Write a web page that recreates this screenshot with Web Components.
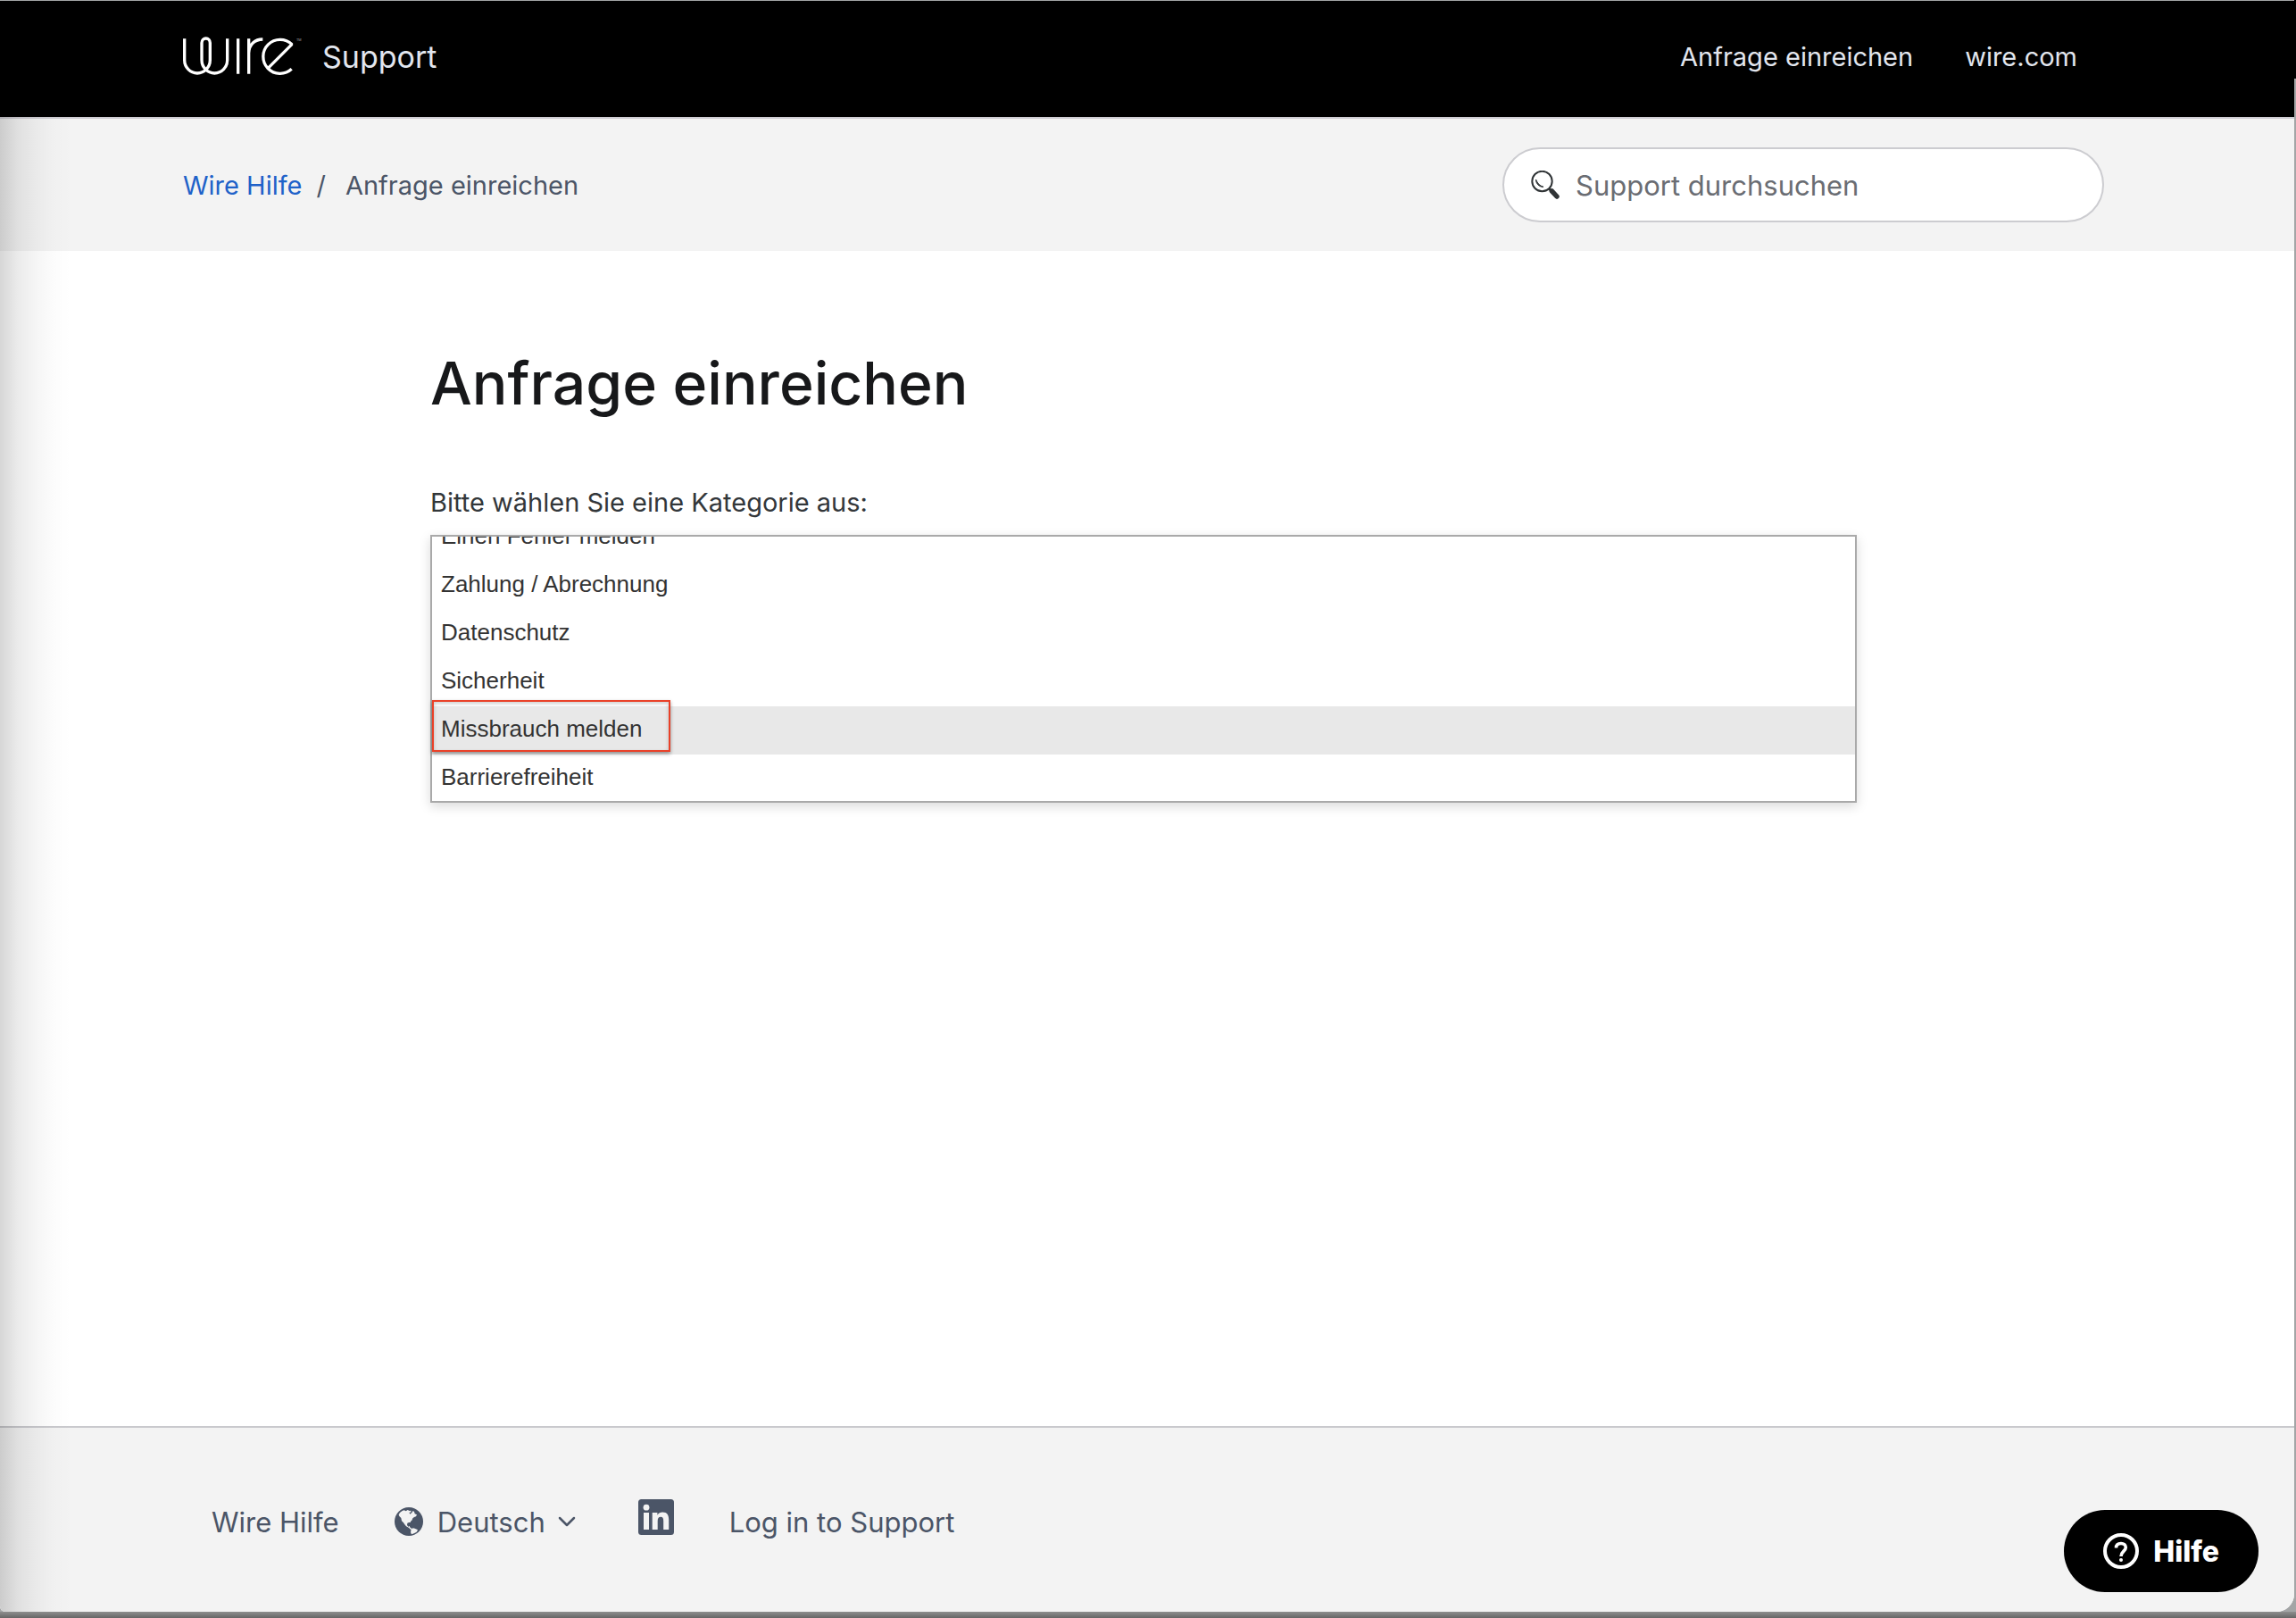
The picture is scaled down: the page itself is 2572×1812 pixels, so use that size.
<!DOCTYPE html>
<html lang="de">
<head>
<meta charset="utf-8">
<meta name="viewport" content="width=device-width, initial-scale=1">
<title>Anfrage einreichen – Wire Hilfe</title>
<style>
  body {
    margin: 0;
    background: #8c8f90;
    font-family: Inter, "Liberation Sans", sans-serif;
    color: #33373a;
  }
</style>
</head>
<body>
<support-window>
  <site-header slot="header"></site-header>
  <crumb-bar slot="crumbs" current="Anfrage einreichen"></crumb-bar>
  <request-form></request-form>
  <site-footer slot="footer"></site-footer>
</support-window>
<help-button text="Hilfe"></help-button>

<script>
class BaseElement extends HTMLElement {
  constructor() {
    super();
    this.attachShadow({ mode: 'open' });
    this._render();
  }
}

// Browser window: rounded lower corners, shade falling in from the left
class SupportWindow extends BaseElement {
  _render() {
    this.shadowRoot.innerHTML = `
      <style>
        :host {
          display: flex;
          box-sizing: border-box;
          min-height: 100vh;
          padding: 1px 2px 7px 0;
          background:
            linear-gradient(#000, #000) top right / 2px 88px no-repeat,
            linear-gradient(#8e8e8e, #666) bottom / 100% 7px no-repeat,
            #a3a5a6;
        }

        .frame {
          flex: 1;
          display: flex;
          flex-direction: column;
          position: relative;
          overflow: hidden;
          background: #fff;
          border-radius: 0 0 20px 6px;
        }

        .shade {
          position: absolute;
          inset: 0 auto 0 0;
          width: 80px;
          background: linear-gradient(
            to right,
            rgba(0, 0, 0, 0.16),
            rgba(0, 0, 0, 0.08) 25%,
            rgba(0, 0, 0, 0.04) 50%,
            rgba(0, 0, 0, 0.01) 75%,
            rgba(0, 0, 0, 0)
          );
          pointer-events: none;
        }

        main {
          flex: 1;
        }
      </style>

      <div class="frame">
        <slot name="header"></slot>
        <slot name="crumbs"></slot>
        <main><slot></slot></main>
        <slot name="footer"></slot>
        <div class="shade"></div>
      </div>
    `;
  }
}

class WireLogo extends BaseElement {
  _render() {
    this.shadowRoot.innerHTML = `
      <style>
        :host {
          display: block;
          height: 44px;
        }

        svg {
          display: block;
        }
      </style>

      <svg width="134" height="44" viewBox="75 121 402 132" fill="none" stroke="#fff" stroke-width="10" role="img" aria-label="Wire">
        <path d="M80 128V200A43 44 0 0 0 123 244A43 44 0 0 0 166 200V142A14 15 0 0 0 138 142V200A43 44 0 0 0 181 244A43 44 0 0 0 224 200V128"/>
        <path d="M260 128V246M296 246V128M296 176C297 147 317 130 343 130"/>
        <path d="M440 230A57 57 0 1 1 441 147L363 225" stroke-linejoin="bevel"/>
        <text x="456" y="137" font-size="11" fill="#aaa" stroke="none">TM</text>
      </svg>
    `;
  }
}

class SiteHeader extends BaseElement {
  _render() {
    this.shadowRoot.innerHTML = `
      <style>
        :host {
          display: block;
          padding-right: 8px;
          background: #000;
          border-bottom: 2px solid #cfcdd3;
        }

        .bar {
          display: flex;
          align-items: center;
          justify-content: space-between;
          box-sizing: border-box;
          max-width: 2152px;
          height: 130px;
          margin: 0 auto;
          padding-bottom: 6px;
        }

        a {
          color: #e2e6ee;
          text-decoration: none;
        }

        .brand {
          display: flex;
          align-items: center;
          gap: 22px;
          font-size: 34px;
        }

        nav {
          display: flex;
          gap: 58px;
          padding-right: 30px;
          font-size: 29px;
        }
      </style>

      <div class="bar">
        <a class="brand" href="#"><wire-logo></wire-logo><span>Support</span></a>
        <nav>
          <a href="#">Anfrage einreichen</a>
          <a href="#">wire.com</a>
        </nav>
      </div>
    `;
  }
}

class CrumbBar extends BaseElement {
  _render() {
    this.shadowRoot.innerHTML = `
      <style>
        :host {
          display: block;
          padding-right: 8px;
          background: #f3f3f3;
        }

        .bar {
          display: flex;
          align-items: center;
          justify-content: space-between;
          max-width: 2152px;
          height: 148px;
          margin: 0 auto;
        }

        ol {
          display: flex;
          margin: 0;
          padding: 0;
          list-style: none;
          font-size: 29px;
          color: #4b5567;
        }

        li + li::before {
          content: "/";
          margin: 0 22px 0 16px;
        }

        a {
          color: #1f62c9;
          text-decoration: none;
        }
      </style>

      <div class="bar">
        <nav aria-label="Breadcrumb">
          <ol>
            <li><a href="#">Wire Hilfe</a></li>
            <li>${this.getAttribute('current') || ''}</li>
          </ol>
        </nav>
        <search-box></search-box>
      </div>
    `;
  }
}

class SearchBox extends BaseElement {
  _render() {
    this.shadowRoot.innerHTML = `
      <style>
        :host {
          display: block;
        }

        label {
          display: flex;
          align-items: center;
          gap: 18px;
          box-sizing: border-box;
          width: 674px;
          height: 84px;
          padding: 0 30px;
          border: 2px solid #ccccd0;
          border-radius: 42px;
          background: #fff;
        }

        input {
          flex: 1;
          min-width: 0;
          padding: 0;
          border: none;
          outline: none;
          background: none;
          font: inherit;
          font-size: 31px;
          color: #33373a;
        }

        input::placeholder {
          color: #6a6d73;
          opacity: 1;
        }
      </style>

      <label>
        <svg width="32" height="32" viewBox="0 0 32 32" fill="none" stroke="#303436" aria-hidden="true">
          <circle cx="12.5" cy="12" r="11.2" stroke-width="2"/>
          <path d="M5.5 10C5.5 14.500 9 18.500 14 18.300C9.500 17 7.500 14.500 5.500 10Z" fill="#303436" stroke-width="1"/>
          <path d="M20 20L23 23" stroke-width="2.5"/>
          <path d="M23.3 22.8L29 29" stroke-width="5.5" stroke-linecap="round"/>
        </svg>
        <input type="search" placeholder="Support durchsuchen" aria-label="Support durchsuchen">
      </label>
    `;
  }
}

class RequestForm extends BaseElement {
  connectedCallback() {
    // The list opens scrolled to its lower entries, the first one half hidden
    this.shadowRoot.querySelector('select').scrollTop = 26;
  }

  _render() {
    this.shadowRoot.innerHTML = `
      <style>
        :host {
          display: block;
          max-width: 1598px;
          margin: 0 auto;
          padding: 104px 8px 0 0;
        }

        h1 {
          margin: 0 0 66px;
          font-size: 66px;
          font-weight: 500;
          line-height: 88px;
          color: #17181a;
        }

        label {
          display: block;
          margin-bottom: 12px;
          font-size: 29px;
          line-height: 48px;
        }

        .list {
          position: relative;
        }

        select {
          display: block;
          box-sizing: border-box;
          width: 100%;
          height: 300px;
          padding: 0;
          border: 2px solid #a9a9a9;
          border-radius: 0;
          outline: none;
          background: #fff;
          box-shadow: 0 4px 12px rgba(0, 0, 0, 0.15);
          font-family: "Liberation Sans", Arial, sans-serif;
          font-size: 26px;
          scrollbar-width: none;
        }

        option {
          box-sizing: border-box;
          height: 54px;
          padding: 10px 10px 0;
          color: #333;
        }

        option:checked {
          background: #e8e8e8;
          color: #333;
        }

        /* Red frame marking the chosen entry */
        .marker {
          position: absolute;
          left: 2px;
          bottom: 57px;
          box-sizing: border-box;
          width: 267px;
          height: 58px;
          border: 2px solid #ea4128;
          box-shadow: 0 2px 4px rgba(0, 0, 0, 0.4), inset 0 2px 4px rgba(0, 0, 0, 0.2);
          pointer-events: none;
        }
      </style>

      <h1>Anfrage einreichen</h1>
      <label for="category">Bitte wählen Sie eine Kategorie aus:</label>
      <div class="list">
        <select id="category" size="6">
          <option>Einen Fehler melden</option>
          <option>Zahlung / Abrechnung</option>
          <option>Datenschutz</option>
          <option>Sicherheit</option>
          <option selected>Missbrauch melden</option>
          <option>Barrierefreiheit</option>
        </select>
        <div class="marker"></div>
      </div>
    `;
  }
}

class SiteFooter extends BaseElement {
  _render() {
    this.shadowRoot.innerHTML = `
      <style>
        :host {
          display: block;
          padding-right: 8px;
          background: #f3f3f3;
          border-top: 2px solid #c9c9cd;
        }

        .bar {
          display: flex;
          align-items: center;
          gap: 62px;
          box-sizing: border-box;
          max-width: 2152px;
          height: 206px;
          margin: 0 auto;
          padding: 4px 32px 0;
          font-size: 31px;
          color: #4b5567;
        }

        a,
        button {
          color: inherit;
          font: inherit;
          text-decoration: none;
        }

        button {
          display: flex;
          align-items: center;
          padding: 0;
          border: none;
          background: none;
          cursor: pointer;
        }

        .globe {
          margin-right: 16px;
        }

        .chevron {
          margin: 0 8px 0 14px;
        }

        svg {
          display: block;
        }

        .linkedin {
          padding-bottom: 10px;
        }
      </style>

      <footer class="bar">
        <a href="#">Wire Hilfe</a>
        <button type="button" aria-haspopup="true">
          <svg class="globe" width="32" height="32" viewBox="0 0 96 96" aria-hidden="true">
            <circle cx="48" cy="48" r="48" fill="#4b5567"/>
            <path fill="#f3f3f3" d="M14 25L18 18L26 12L32 10L38 13L44 9L50 12L56 11L54 17L49 17L52 23L58 18L62 12L66 15L68 22L75 25L72 31L66 33L61 37L58 44L53 48L54 51L48 51L43 53L42 60L46 65L51 63L51 67L56 70L58 77L54 74L47 68L39 64L34 58L30 52L24 46L22 36L16 30Z"/>
            <path fill="#f3f3f3" d="M56 74L61 70L68 71L78 76L74 83L65 88L57 91L54 84Z"/>
          </svg>
          <span>Deutsch</span>
          <svg class="chevron" width="20" height="12" viewBox="0 0 20 12" fill="none" stroke="#4b5567" stroke-width="2.5" stroke-linecap="round" stroke-linejoin="round" aria-hidden="true">
            <path d="M2 2L10 10L18 2"/>
          </svg>
        </button>
        <a class="linkedin" href="#" aria-label="LinkedIn">
          <svg width="40" height="40" viewBox="0 0 40 40" aria-hidden="true">
            <rect width="40" height="40" rx="3.5" fill="#4b5567"/>
            <g fill="#f3f3f3">
              <circle cx="9" cy="9.2" r="3.4"/>
              <rect x="6" y="15" width="6" height="19"/>
              <path d="M15.7 15H21.4V17.7C22.7 15.6 24.8 14.5 27.2 14.5C32.4 14.5 34.2 17.8 34.2 23V34H28.2V24.4C28.2 21.5 27.6 19.7 25.2 19.7C22.6 19.7 21.7 21.6 21.7 24.4V34H15.7Z"/>
            </g>
          </svg>
        </a>
        <a href="#">Log in to Support</a>
      </footer>
    `;
  }
}

class HelpButton extends BaseElement {
  _render() {
    const text = this.getAttribute('text') || '';

    this.shadowRoot.innerHTML = `
      <style>
        :host {
          position: fixed;
          right: 42px;
          bottom: 29px;
        }

        button {
          display: flex;
          align-items: center;
          gap: 16px;
          height: 92px;
          padding: 0 44px;
          border: none;
          border-radius: 46px;
          background: #000;
          color: #fff;
          font: inherit;
          font-size: 32px;
          font-weight: 800;
          cursor: pointer;
        }
      </style>

      <button type="button">
        <svg width="40" height="40" viewBox="0 0 40 40" fill="none" stroke="#fff" aria-hidden="true">
          <circle cx="20" cy="20" r="18" stroke-width="4"/>
          <path d="M14.5 16.5C14.5 13 17 11.5 20 11.5C23 11.5 25.3 13.3 25.3 16C25.3 20 20 20.5 20 26" stroke-width="3.6"/>
          <circle cx="20" cy="30" r="2" fill="#fff" stroke="none"/>
        </svg>
        <span>${text}</span>
      </button>
    `;
  }
}

customElements.define('wire-logo', WireLogo);
customElements.define('search-box', SearchBox);
customElements.define('site-header', SiteHeader);
customElements.define('crumb-bar', CrumbBar);
customElements.define('request-form', RequestForm);
customElements.define('site-footer', SiteFooter);
customElements.define('help-button', HelpButton);
customElements.define('support-window', SupportWindow);
</script>
</body>
</html>
